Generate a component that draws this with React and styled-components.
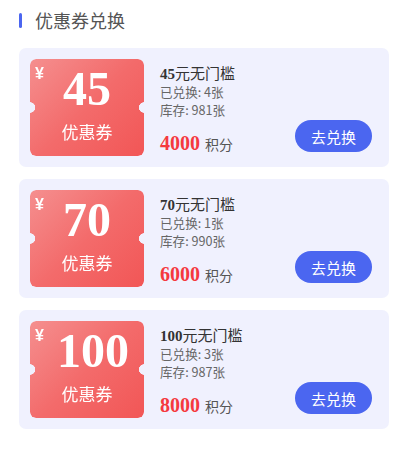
import React from 'react';
import styled, { createGlobalStyle } from 'styled-components';

const GlobalStyle = createGlobalStyle`
  body {
    margin: 0;
    background: #fff;
    font-family: "Noto Sans CJK SC", "Noto Sans", sans-serif;
  }
`;

const coupons = [
  { value: 45, used: 4, stock: 981, points: 4000 },
  { value: 70, used: 1, stock: 990, points: 6000 },
  { value: 100, used: 3, stock: 987, points: 8000 },
];

const Page = styled.div`
  width: 410px;
  padding: 9px 21px 0 19px;
  box-sizing: border-box;
`;

const Header = styled.div`
  display: flex;
  align-items: center;
  gap: 13px;
  height: 22px;
  margin-bottom: 17px;
`;

const Bar = styled.span`
  width: 3px;
  height: 15px;
  border-radius: 2px;
  background: #4b66f0;
`;

const Title = styled.h2`
  margin: 0;
  font-size: 18px;
  font-weight: 400;
  color: #555;
  line-height: 22px;
`;

const List = styled.div`
  display: flex;
  flex-direction: column;
  gap: 12px;
`;

const Card = styled.div`
  display: flex;
  align-items: stretch;
  height: 119px;
  box-sizing: border-box;
  padding: 11px;
  border-radius: 7px;
  background: #f0f1fe;
`;

const Ticket = styled.div`
  position: relative;
  flex: 0 0 114px;
  height: 97px;
  border-radius: 6px;
  background: linear-gradient(135deg, #f58f8f 0%, #f36b6b 50%, #f25656 100%);
  color: #fff;
  display: flex;
  flex-direction: column;
  align-items: center;
  -webkit-mask: radial-gradient(circle 5px at 0 50%, transparent 5px, #000 5.5px) left / 51% 100% no-repeat,
    radial-gradient(circle 5px at 100% 50%, transparent 5px, #000 5.5px) right / 51% 100% no-repeat;
`;

const Yen = styled.span`
  position: absolute;
  left: 5px;
  top: 6px;
  font-family: "Liberation Sans", sans-serif;
  font-weight: 700;
  font-size: 16px;
  line-height: 18px;
`;

const Amount = styled.div`
  margin-top: 4px;
  font-family: "Liberation Serif", serif;
  font-weight: 700;
  font-size: 48px;
  line-height: 52px;
  padding-left: ${p => (p.$wide ? '12px' : '0')};
`;

const Label = styled.div`
  margin-top: 6px;
  font-size: 17px;
  line-height: 22px;
`;

const Info = styled.div`
  flex: 1;
  display: flex;
  flex-direction: column;
  padding-left: 16px;
  padding-top: 5px;
`;

const Name = styled.div`
  font-size: 15px;
  line-height: 18px;
  color: #333;
`;

const Num = styled.b`
  font-family: "Liberation Serif", serif;
  font-weight: 700;
`;

const Meta = styled.div`
  font-size: 12.6px;
  line-height: 18px;
  color: #666;
`;

const Bottom = styled.div`
  margin-top: auto;
  display: flex;
  align-items: center;
  justify-content: space-between;
`;

const Points = styled.div`
  display: flex;
  align-items: baseline;
  gap: 5px;
  padding-top: 10px;
  color: #555;
  font-size: 14px;
`;

const Price = styled.span`
  font-family: "Liberation Serif", serif;
  font-weight: 700;
  font-size: 20px;
  color: #f5393f;
`;

const Button = styled.button`
  width: 77px;
  height: 32px;
  margin-right: 6px;
  margin-bottom: 4px;
  border: 0;
  border-radius: 16px;
  background: #4b66f0;
  color: #fff;
  font-family: inherit;
  font-size: 15px;
  cursor: pointer;
`;

export default function App() {
  return (
    <Page>
      <GlobalStyle />
      <Header>
        <Bar />
        <Title>优惠券兑换</Title>
      </Header>
      <List>
        {coupons.map(c => (
          <Card key={c.value}>
            <Ticket>
              <Yen>¥</Yen>
              <Amount $wide={c.value >= 100}>{c.value}</Amount>
              <Label>优惠券</Label>
            </Ticket>
            <Info>
              <Name><Num>{c.value}</Num>元无门槛</Name>
              <Meta>已兑换: {c.used}张</Meta>
              <Meta>库存: {c.stock}张</Meta>
              <Bottom>
                <Points><Price>{c.points}</Price>积分</Points>
                <Button>去兑换</Button>
              </Bottom>
            </Info>
          </Card>
        ))}
      </List>
    </Page>
  );
}
